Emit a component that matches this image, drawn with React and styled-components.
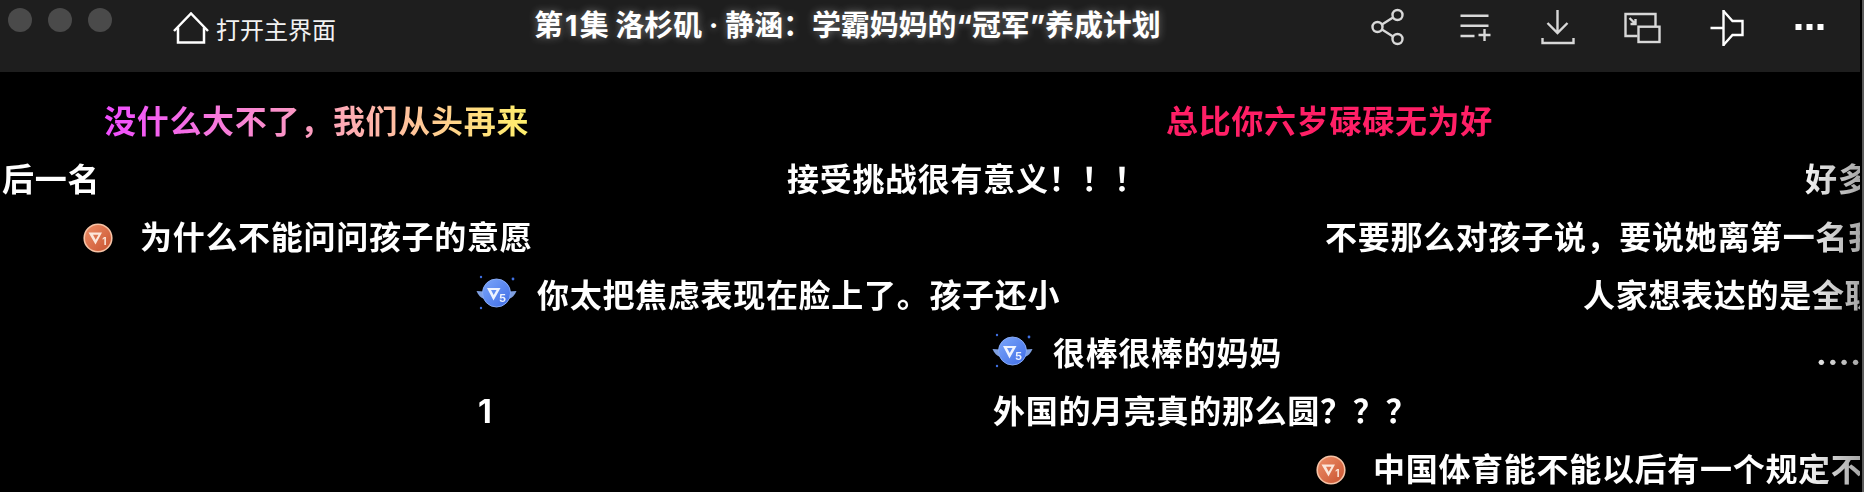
// 播放器窗口：顶部标题栏 + 下面的弹幕层
import React from "react";
import styled, { createGlobalStyle } from "styled-components";

const GlobalStyle = createGlobalStyle`
  html, body {
    margin: 0;
    padding: 0;
    background: #000;
  }
`;

const FONT = `Inter, "Noto Sans CJK SC", sans-serif`;

const ROWS = [
  [
    { left: 104, text: "没什么大不了，我们从头再来", tone: "rainbow" },
    { left: 1166, text: "总比你六岁碌碌无为好", tone: "red" },
  ],
  [
    { left: 2, text: "后一名" },
    { left: 787, text: "接受挑战很有意义！！！" },
    { left: 1805, text: "好多" },
  ],
  [
    { left: 83, text: "为什么不能问问孩子的意愿", badge: "v1" },
    { left: 1325, text: "不要那么对孩子说，要说她离第一名我" },
  ],
  [
    { left: 476, text: "你太把焦虑表现在脸上了。孩子还小", badge: "v5" },
    { left: 1583, text: "人家想表达的是全职" },
  ],
  [
    { left: 992, text: "很棒很棒的妈妈", badge: "v5" },
    { left: 1816, text: "....." },
  ],
  [
    { left: 478, text: "1" },
    { left: 993, text: "外国的月亮真的那么圆？？？" },
  ],
  [{ left: 1316, text: "中国体育能不能以后有一个规定不", badge: "v1" }],
];

function BadgeV1() {
  return (
    <svg width="30" height="30" viewBox="0 0 30 30">
      <defs>
        <linearGradient id="v1fill" x1="0" y1="0" x2="1" y2="1">
          <stop offset="0" stopColor="#ee8f68" />
          <stop offset="1" stopColor="#c8522f" />
        </linearGradient>
      </defs>
      <circle cx="15" cy="15" r="13.8" fill="url(#v1fill)" stroke="#f6c3a6" strokeWidth="1.6" />
      <path d="M5.5 9.5 L19 9.5 L12.5 21.5 Z M10 11.8 L15.5 11.8 L12.7 16.8 Z" fill="#fbe6da" fillRule="evenodd" />
      <text x="19.2" y="21.5" fontFamily="Inter, sans-serif" fontSize="10" fontWeight="700" fill="#fbe6da">1</text>
    </svg>
  );
}

function BadgeV5() {
  return (
    <svg width="41" height="46" viewBox="0 0 41 46">
      <defs>
        <linearGradient id="v5fill" x1="0" y1="0" x2="1" y2="1">
          <stop offset="0" stopColor="#7ba6fa" />
          <stop offset="1" stopColor="#3f6ce6" />
        </linearGradient>
      </defs>
      <path d="M0.5 18 L8 18.5 L8.5 26 C5 25 2 22 0.5 18 Z" fill="#7f9fe0" />
      <path d="M40.5 18 L33 18.5 L32.5 26 C36 25 39 22 40.5 18 Z" fill="#7f9fe0" />
      <circle cx="20.5" cy="20" r="14" fill="url(#v5fill)" stroke="#86a9f4" strokeWidth="1" />
      <path d="M11 15 L24.5 15 L17.5 27.5 Z M15 17 L20.5 17 L17.7 22 Z" fill="#eef3ff" fillRule="evenodd" />
      <text x="23" y="28.5" fontFamily="Inter, sans-serif" fontSize="11" fontWeight="700" fill="#eef3ff">5</text>
      <circle cx="5" cy="4" r="1.2" fill="#3f6fe0" />
      <circle cx="37" cy="6" r="1.4" fill="#3f6fe0" />
      <circle cx="5" cy="35" r="1.2" fill="#3f6fe0" />
    </svg>
  );
}

export default function App() {
  return (
    <>
      <GlobalStyle />
      <Page>
        <Main>
          <TitleBar>
            <Lights>
              <Light />
              <Light />
              <Light />
            </Lights>
            <HomeLink>
              <svg width="36" height="32" viewBox="0 0 36 32" fill="none" stroke="#fff" strokeWidth="2.5">
                <path d="M1 19 L18 1.5 L35 19" />
                <path d="M5 15.5 V30.5 H31 V15.5" />
              </svg>
              打开主界面
            </HomeLink>
            <Title>第{"\u200a"}1{"\u200a"}集 洛杉矶 · 静涵：学霸妈妈的“冠军”养成计划</Title>
            <Tools>
              <ToolIcon viewBox="0 0 44 44">
                <circle cx="31.5" cy="10" r="5" />
                <circle cx="11.5" cy="22" r="5" />
                <circle cx="31.5" cy="34" r="5" />
                <path d="M16 19.5 L27 12.5 M16 24.5 L27 31.5" />
              </ToolIcon>
              <ToolIcon viewBox="0 0 44 44">
                <path d="M10.5 10.7 H38.5 M10.5 20.7 H38.5 M10.5 31 H24.5 M28.5 30 H40.5 M34.5 24 V36" />
              </ToolIcon>
              <ToolIcon viewBox="0 0 44 44">
                <path d="M23.5 5 V28 M13.5 18 L23.5 28 L33.5 18" />
                <path d="M8.5 33 V38 H39.5 V33" />
              </ToolIcon>
              <ToolIcon viewBox="0 0 44 44">
                <path d="M37.5 21 V9 H7.5 V31 H19.5" />
                <rect x="20.5" y="21.7" width="21" height="15.3" />
                <path d="M11.5 13 L17.5 19 M17.5 14 V19 H12.5" />
              </ToolIcon>
              <ToolIcon viewBox="0 0 44 44" $bright>
                <path d="M8.5 23 H21.5 M21.5 5 V41" />
                <path d="M21.5 6 L30.5 16 H40.5 V30 H30.5 L21.5 40" />
              </ToolIcon>
              <ToolIcon viewBox="0 0 44 44" $bright>
                <rect x="9.5" y="19" width="6" height="6" fill="#fff" stroke="none" />
                <rect x="20.5" y="19" width="6" height="6" fill="#fff" stroke="none" />
                <rect x="31.5" y="19" width="6" height="6" fill="#fff" stroke="none" />
              </ToolIcon>
            </Tools>
          </TitleBar>
          <Danmaku>
            {ROWS.map((row, i) => (
              <Row key={i}>
                {row.map((item) => (
                  <Comment key={item.text} $left={item.left} $gap={item.badge === "v5" ? 20 : 27}>
                    {item.badge === "v1" && <BadgeV1 />}
                    {item.badge === "v5" && <BadgeV5 />}
                    <CommentText $tone={item.tone}>{item.text}</CommentText>
                  </Comment>
                ))}
              </Row>
            ))}
          </Danmaku>
        </Main>
        <Edge />
      </Page>
    </>
  );
}

const Page = styled.div`
  display: flex;
  width: 1864px;
  height: 492px;
  overflow: hidden;
  background: #000;
  font-family: ${FONT};
`;

const Main = styled.div`
  flex: 1;
  min-width: 0;
  display: flex;
  flex-direction: column;
`;

const Edge = styled.div`
  width: 2px;
  margin-left: 2px;
  background: #5a5a5a;
`;

const TitleBar = styled.header`
  flex: 0 0 72px;
  display: flex;
  align-items: flex-start;
  background: #1e1e1e;
  padding-left: 8px;
  box-sizing: border-box;
`;

const Lights = styled.div`
  display: flex;
  gap: 16px;
  margin-top: 8px;
`;

const Light = styled.span`
  width: 24px;
  height: 24px;
  border-radius: 50%;
  background: #4a4a4a;
`;

const HomeLink = styled.div`
  display: flex;
  align-items: center;
  gap: 7px;
  margin-left: 61px;
  margin-top: 11px;
  height: 34px;
  font-size: 24px;
  color: #f2f2f2;
  white-space: nowrap;
`;

const Title = styled.h1`
  margin: 8px 0 0 198px;
  font-size: 29px;
  line-height: 36px;
  font-weight: 700;
  letter-spacing: -0.1px;
  color: #fff;
  white-space: nowrap;
  text-shadow: 0 0 8px rgba(255, 255, 255, 0.4);
`;

const Tools = styled.div`
  display: flex;
  margin-left: auto;
  margin-top: 5px;
  margin-right: 10px;
`;

const ToolIcon = styled.svg`
  width: 44px;
  height: 44px;
  margin: 0 20px;
  flex-shrink: 0;
  fill: none;
  stroke: ${(p) => (p.$bright ? "#fff" : "#d8d8d8")};
  stroke-width: 2.4;
`;

const Danmaku = styled.main`
  flex: 1;
  min-height: 0;
  padding-top: 21px;
  overflow: hidden;
  -webkit-mask-image: linear-gradient(to right, #000 1800px, rgba(0, 0, 0, 0.65) 1860px);
  mask-image: linear-gradient(to right, #000 1800px, rgba(0, 0, 0, 0.65) 1860px);
`;

const Row = styled.div`
  position: relative;
  height: 58px;
`;

const Comment = styled.div`
  position: absolute;
  top: 0;
  left: ${(p) => p.$left}px;
  height: 58px;
  display: flex;
  align-items: center;
  gap: ${(p) => p.$gap}px;
  white-space: nowrap;
`;

const toneStyles = {
  rainbow: `
    background: linear-gradient(to right, #f04dff, #ffb0b0 60%, #fff06a);
    -webkit-background-clip: text;
    background-clip: text;
    color: transparent;
  `,
  red: `color: #ff1f66;`,
};

const CommentText = styled.span`
  font-size: 32px;
  line-height: 44px;
  font-weight: 700;
  letter-spacing: 0.7px;
  color: #fff;
  ${(p) => toneStyles[p.$tone] || ""}
`;
